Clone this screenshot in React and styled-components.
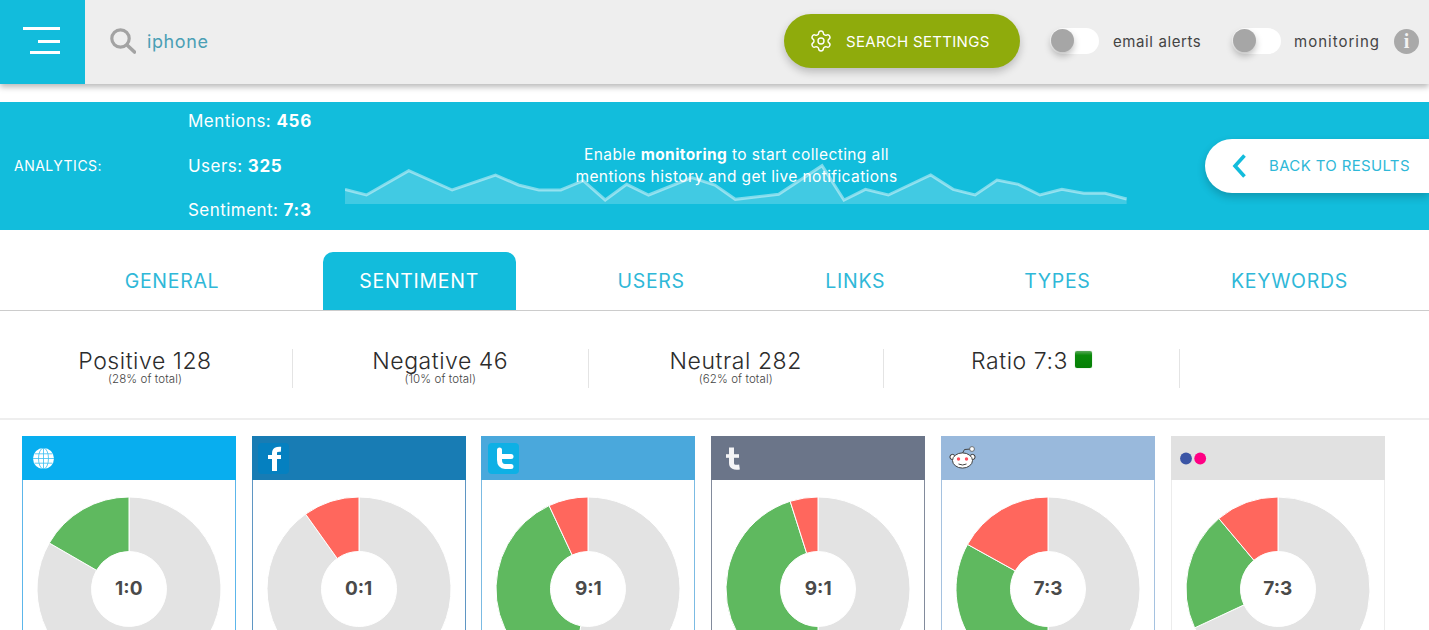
import React from "react";
import styled, { createGlobalStyle } from "styled-components";
import { Settings } from "lucide-react";

const Global = createGlobalStyle`
  html, body { margin: 0; padding: 0; height: 630px; overflow: hidden; background: #fff; }
  body { font-family: Inter, "Open Sans", sans-serif; color: #333; }
  * { box-sizing: border-box; }
`;

const Page = styled.div`width: 1429px;`;

const Header = styled.header`
  display: flex;
  align-items: center;
  height: 84px;
  padding: 0 10px 2px 0;
  background: #eeeeee;
  box-shadow: 0 3px 6px rgba(0, 0, 0, 0.28);
  margin-bottom: 18px;
`;
const MenuButton = styled.div`
  display: flex;
  align-items: center;
  justify-content: center;
  align-self: flex-start;
  width: 85px;
  height: 84px;
  padding: 0 1px 2px 0;
  background: #12bcdc;
`;
const SearchBox = styled.div`
  flex: 1;
  display: flex;
  align-items: center;
  gap: 11px;
  padding-left: 25px;
`;
const SearchText = styled.span`
  font-size: 18px;
  letter-spacing: 0.6px;
  color: #4a9fb5;
`;
const SettingsButton = styled.div`
  display: flex;
  align-items: center;
  gap: 13px;
  width: 236px;
  height: 54px;
  padding-left: 25px;
  margin-right: 30px;
  border-radius: 27px;
  background: #8fab0c;
  color: #fff;
  font-size: 15px;
  letter-spacing: 0.3px;
  box-shadow: 0 4px 8px rgba(0, 0, 0, 0.22);
`;
const Toggle = styled.div`
  width: 49px;
  height: 26px;
  padding: 1px 0 0 1px;
  margin-right: ${(p) => p.$mr}px;
  border-radius: 13px;
  background: #fff;
`;
const Knob = styled.div`
  width: 23px;
  height: 23px;
  border-radius: 50%;
  background: #a6a6a6;
  box-shadow: 0 4px 7px rgba(0, 0, 0, 0.25);
`;
const ToggleLabel = styled.span`
  width: ${(p) => p.$w}px;
  margin-right: ${(p) => p.$mr}px;
  font-size: 15px;
  letter-spacing: ${(p) => p.$ls}px;
  color: #444;
  white-space: nowrap;
`;
const InfoDot = styled.div`
  display: flex;
  align-items: center;
  justify-content: center;
  width: 25px;
  height: 25px;
  border-radius: 50%;
  background: #a9a9a9;
  color: #f2f2f2;
  font: bold 20px "Liberation Serif", serif;
`;

const Band = styled.section`
  display: flex;
  height: 128px;
  background: #12bddc;
  color: #fff;
`;
const BandLabel = styled.div`
  display: flex;
  align-items: center;
  width: 188px;
  padding: 0 0 1px 14px;
  font-size: 14px;
  letter-spacing: 0.5px;
`;
const Counters = styled.div`
  display: flex;
  flex-direction: column;
  gap: 20.5px;
  width: 157px;
  padding-top: 7px;
  font-size: 17px;
  line-height: 24px;
  letter-spacing: 0.45px;
  b { font-weight: 700; letter-spacing: 0.7px; }
`;
const ChartArea = styled.div`
  position: relative;
  display: flex;
  flex-direction: column;
  justify-content: flex-end;
  width: 783px;
  padding-bottom: 25px;
`;
const ChartNote = styled.p`
  position: absolute;
  top: 42px;
  left: 0;
  width: 783px;
  margin: 0;
  text-align: center;
  font-size: 15.5px;
  line-height: 22px;
  letter-spacing: 0.4px;
  b { font-weight: 700; }
`;
const BackButton = styled.div`
  display: flex;
  align-items: center;
  gap: 23px;
  align-self: center;
  width: 224px;
  height: 54px;
  margin-left: 77px;
  padding: 0 0 1px 27px;
  border-radius: 27px 0 0 27px;
  background: #fff;
  color: #2fb8d8;
  font-size: 15px;
  letter-spacing: 0.35px;
  box-shadow: 0 4px 8px rgba(0, 0, 0, 0.2);
`;

const Tabs = styled.nav`
  display: grid;
  grid-template-columns: 174px 193px 144px 137px 140px 197px;
  column-gap: 63.6px;
  align-items: end;
  height: 81px;
  padding-left: 85px;
  border-bottom: 1px solid #cccccc;
`;
const Tab = styled.div`
  display: flex;
  align-items: center;
  justify-content: center;
  height: 58px;
  padding-bottom: 1px;
  border-radius: 10px 10px 0 0;
  font-size: 19.5px;
  font-weight: 400;
  letter-spacing: 0.7px;
  color: ${(p) => (p.$active ? "#fff" : "#2fb8d8")};
  background: ${(p) => (p.$active ? "#12bcdc" : "transparent")};
`;

const Stats = styled.section`
  display: grid;
  grid-template-columns: 293px 295.5px 295.5px 296px;
  height: 109px;
  padding-top: 38px;
  border-bottom: 2px solid #eeeeee;
`;
const Stat = styled.div`
  display: flex;
  flex-direction: column;
  align-items: center;
  height: 39px;
  border-right: 1px solid #e4e4e4;
  &:first-child { padding-right: 2px; }
`;
const StatValue = styled.div`
  display: flex;
  align-items: center;
  gap: 7px;
  height: 24px;
  font-size: 23px;
  font-weight: 300;
  letter-spacing: 0.55px;
  line-height: 24px;
  color: #2c2c2c;
`;
const StatNote = styled.div`
  font-size: 11.5px;
  font-weight: 300;
  line-height: 13px;
  letter-spacing: 0.1px;
  color: #444;
`;
const RatioMark = styled.span`
  width: 17px;
  height: 17px;
  margin-top: -4px;
  border-radius: 2px;
  background: linear-gradient(#5aa85a, #0a8a0a 25%, #067f06);
  box-shadow: 0 0 1px rgba(0, 120, 0, 0.6);
`;

const Cards = styled.section`
  display: grid;
  grid-template-columns: repeat(6, 214px);
  column-gap: 15.8px;
  padding: 16px 0 0 21.8px;
`;
const Card = styled.article`
  height: 300px;
  border: 1px solid ${(p) => p.$border};
  border-top: 0;
`;
const CardHead = styled.div`
  display: flex;
  align-items: center;
  height: 44px;
  margin: 0 -1px;
  padding-left: ${(p) => p.$pad}px;
  background: ${(p) => p.$color};
`;
const CardBody = styled.div`
  position: relative;
  display: flex;
  justify-content: center;
  padding-top: 17px;
`;
const Ratio = styled.div`
  position: absolute;
  top: 17px;
  left: 0;
  right: 0;
  height: 184px;
  line-height: 184px;
  text-align: center;
  font-size: 19px;
  font-weight: 700;
  color: #4a4a4a;
`;
const LogoTile = styled.div`
  display: flex;
  align-items: center;
  justify-content: center;
  width: 31px;
  height: 31px;
  border-radius: 4px;
  background: ${(p) => p.$color};
`;

const COLORS = { grey: "#e3e3e3", green: "#5fb95f", red: "#ff675d" };

function polar(r, deg) {
  const a = (deg * Math.PI) / 180;
  return [92 + r * Math.sin(a), 92 - r * Math.cos(a)];
}
function slicePath(from, to) {
  const R = 92;
  const r = 37.5;
  const large = to - from > 180 ? 1 : 0;
  const [x1, y1] = polar(R, from);
  const [x2, y2] = polar(R, to);
  const [x3, y3] = polar(r, to);
  const [x4, y4] = polar(r, from);
  return `M${x1} ${y1}A${R} ${R} 0 ${large} 1 ${x2} ${y2}L${x3} ${y3}A${r} ${r} 0 ${large} 0 ${x4} ${y4}Z`;
}
function Donut({ slices }) {
  return (
    <svg width="184" height="184" viewBox="0 0 184 184">
      {slices.map(([c, from, to]) => (
        <path key={c} d={slicePath(from, to)} fill={COLORS[c]} stroke="#fff" strokeWidth="1" />
      ))}
    </svg>
  );
}

const zoomPts = [
  [10, 178], [52, 195], [135, 122], [220, 180], [305, 135], [350, 165], [390, 180], [433, 180],
  [477, 152], [520, 210], [562, 163], [605, 195], [690, 143], [735, 165], [775, 208], [860, 193],
  [945, 107], [988, 210], [1030, 178], [1075, 195], [1158, 135], [1202, 178], [1245, 195],
  [1288, 150], [1330, 163], [1372, 195], [1415, 178], [1458, 190], [1500, 190], [1542, 207],
];
const pts = zoomPts.map(([x, y]) => [(x - 10) / 1.96, y / 3 - 30]);
const linePts = pts.map((p) => p.join(",")).join(" ");
const areaPts = `0,44 ${linePts} ${pts[pts.length - 1][0]},44`;

function Spark() {
  return (
    <svg width="783" height="45" viewBox="0 0 783 45" style={{ display: "block" }}>
      <polygon points={areaPts} fill="rgba(255,255,255,0.2)" />
      <polyline points={linePts} fill="none" stroke="rgba(255,255,255,0.45)" strokeWidth="3" />
    </svg>
  );
}

const MenuIcon = () => (
  <svg width="38" height="28" viewBox="0 0 38 28" stroke="#fff" strokeWidth="3">
    <path d="M0 1.5H37M15 14.5H37M7 25.5H37" />
  </svg>
);
const SearchIcon = () => (
  <svg width="26" height="26" viewBox="0 0 26 26" fill="none" stroke="#a3a3a3">
    <circle cx="10.5" cy="10.5" r="8.7" strokeWidth="3.2" />
    <path d="M17 17L24.5 24" strokeWidth="3.6" strokeLinecap="round" />
  </svg>
);
const BackIcon = () => (
  <svg width="14" height="24" viewBox="0 0 14 24" fill="none" stroke="#12bcdc" strokeWidth="3.6">
    <path d="M12.5 1.5L3 12L12.5 22.5" />
  </svg>
);
const GlobeIcon = () => (
  <svg width="21" height="21" viewBox="0 0 21 21">
    <circle cx="10.5" cy="10.5" r="10.5" fill="#fff" />
    <g fill="none" stroke="#08aeef" strokeWidth="0.8" opacity="0.8">
      <ellipse cx="10.5" cy="10.5" rx="5" ry="10.5" />
      <path d="M10.5 0V21M0 10.5H21M1.5 5.8H19.5M1.5 15.2H19.5" />
    </g>
  </svg>
);
const FacebookIcon = () => (
  <svg width="31" height="31" viewBox="0 0 31 31" fill="none" stroke="#fff">
    <path d="M16.5 28V10.5C16.5 7 18.5 6 23 6.3" strokeWidth="5" />
    <path d="M10 14H23" strokeWidth="4" />
  </svg>
);
const TwitterIcon = () => (
  <svg width="31" height="31" viewBox="0 0 31 31" fill="none" stroke="#fff" strokeWidth="5" strokeLinecap="round">
    <path d="M11.5 7V17C11.5 21 13.5 23.5 17 23.5H23" />
    <path d="M11.5 13.5H23" />
  </svg>
);
const TumblrIcon = () => (
  <svg width="14" height="23" viewBox="0 0 14 23" fill="none" stroke="#f4f4f6">
    <path d="M5.5 0.5V16C5.5 19.5 8 20.8 13.5 20" strokeWidth="5" />
    <path d="M0 9H13" strokeWidth="3.6" />
  </svg>
);
const RedditIcon = () => (
  <svg width="28" height="24" viewBox="0 0 28 24">
    <path d="M13 8L15.5 3.5L22 3" fill="none" stroke="#444" strokeWidth="1" />
    <circle cx="23" cy="3" r="2.4" fill="#fff" stroke="#555" strokeWidth="0.8" />
    <circle cx="3.5" cy="11" r="2.6" fill="#fff" stroke="#333" strokeWidth="1" />
    <circle cx="23.5" cy="11" r="2.6" fill="#fff" stroke="#333" strokeWidth="1" />
    <ellipse cx="13.5" cy="14.5" rx="10" ry="7.6" fill="#fff" stroke="#444" strokeWidth="1" />
    <circle cx="9.5" cy="13" r="1.7" fill="#ff4f5e" />
    <circle cx="17.5" cy="13" r="1.7" fill="#ff4f5e" />
    <path d="M9.5 18Q13.5 20 17.5 18" fill="none" stroke="#444" strokeWidth="1" />
  </svg>
);
const FlickrIcon = () => (
  <svg width="27" height="13" viewBox="0 0 27 13">
    <circle cx="6" cy="6.5" r="5.9" fill="#3b55a5" />
    <circle cx="20.2" cy="6.5" r="5.9" fill="#ff0084" />
  </svg>
);

const cards = [
  { color: "#08aeef", border: "#5cb6ea", pad: 11, icon: <GlobeIcon />, ratio: "1:0", slices: [["grey", 0, 300], ["green", 300, 360]] },
  { color: "#187cb4", border: "#5f96c3", pad: 6, icon: <LogoTile $color="#0580c0"><FacebookIcon /></LogoTile>, ratio: "0:1", slices: [["grey", 0, 324.5], ["red", 324.5, 360]] },
  { color: "#4aa8dc", border: "#7bbbe3", pad: 7, icon: <LogoTile $color="#0eb0e5"><TwitterIcon /></LogoTile>, ratio: "9:1", slices: [["grey", 0, 191], ["green", 191, 335], ["red", 335, 360]] },
  { color: "#6b7589", border: "#828b9c", pad: 15, icon: <TumblrIcon />, ratio: "9:1", slices: [["grey", 0, 180], ["green", 180, 342.4], ["red", 342.4, 360]] },
  { color: "#99b9dc", border: "#a5c2e0", pad: 8, icon: <RedditIcon />, ratio: "7:3", slices: [["grey", 0, 180], ["green", 180, 299], ["red", 299, 360]] },
  { color: "#e1e1e1", border: "#ececec", pad: 9, icon: <FlickrIcon />, ratio: "7:3", slices: [["grey", 0, 245], ["green", 245, 320], ["red", 320, 360]] },
];

const tabs = ["GENERAL", "SENTIMENT", "USERS", "LINKS", "TYPES", "KEYWORDS"];

export default function App() {
  return (
    <Page>
      <Global />
      <Header>
        <MenuButton><MenuIcon /></MenuButton>
        <SearchBox>
          <SearchIcon />
          <SearchText>iphone</SearchText>
        </SearchBox>
        <SettingsButton>
          <Settings size={24} strokeWidth={1.4} />
          SEARCH SETTINGS
        </SettingsButton>
        <Toggle $mr={14}><Knob /></Toggle>
        <ToggleLabel $w={88} $mr={31} $ls={0.6}>email alerts</ToggleLabel>
        <Toggle $mr={13}><Knob /></Toggle>
        <ToggleLabel $w={86} $mr={14} $ls={1}>monitoring</ToggleLabel>
        <InfoDot>i</InfoDot>
      </Header>

      <Band>
        <BandLabel>ANALYTICS:</BandLabel>
        <Counters>
          <div>Mentions: <b>456</b></div>
          <div>Users: <b>325</b></div>
          <div>Sentiment: <b>7:3</b></div>
        </Counters>
        <ChartArea>
          <Spark />
          <ChartNote>
            Enable <b>monitoring</b> to start collecting all<br />
            mentions history and get live notifications
          </ChartNote>
        </ChartArea>
        <BackButton>
          <BackIcon />
          BACK TO RESULTS
        </BackButton>
      </Band>

      <Tabs>
        {tabs.map((t) => (
          <Tab key={t} $active={t === "SENTIMENT"}>{t}</Tab>
        ))}
      </Tabs>

      <Stats>
        <Stat>
          <StatValue>Positive 128</StatValue>
          <StatNote>(28% of total)</StatNote>
        </Stat>
        <Stat>
          <StatValue>Negative 46</StatValue>
          <StatNote>(10% of total)</StatNote>
        </Stat>
        <Stat>
          <StatValue>Neutral 282</StatValue>
          <StatNote>(62% of total)</StatNote>
        </Stat>
        <Stat>
          <StatValue>Ratio 7:3 <RatioMark /></StatValue>
        </Stat>
      </Stats>

      <Cards>
        {cards.map((c, i) => (
          <Card key={i} $border={c.border}>
            <CardHead $color={c.color} $pad={c.pad}>{c.icon}</CardHead>
            <CardBody>
              <Donut slices={c.slices} />
              <Ratio>{c.ratio}</Ratio>
            </CardBody>
          </Card>
        ))}
      </Cards>
    </Page>
  );
}
